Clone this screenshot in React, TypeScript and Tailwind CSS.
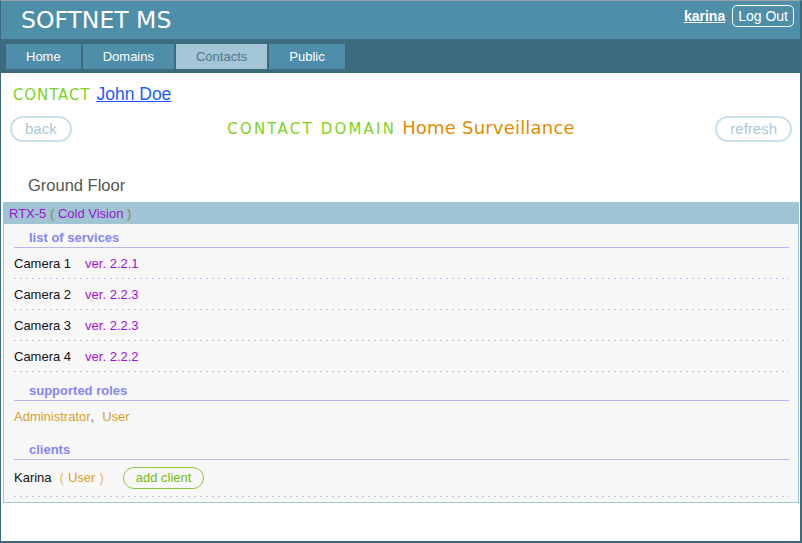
import React from "react";

function Dotted() {
  return (
    <div className="h-px bg-[image:repeating-linear-gradient(90deg,#c3bcf3_0px,#c3bcf3_2px,transparent_2px,transparent_6px)]" />
  );
}

function Heading({ children, first }: { children: React.ReactNode; first?: boolean }) {
  return (
    <div
      className={
        (first ? "pt-[4px] " : "pt-[9px] ") +
        "pl-[15px] leading-[19px] text-[13px] font-bold text-[#8585f2] border-b border-[#b9b6f2]"
      }
    >
      {children}
    </div>
  );
}

export default function App() {
  const services: [string, string][] = [
    ["Camera 1", "2.2.1"],
    ["Camera 2", "2.2.3"],
    ["Camera 3", "2.2.3"],
    ["Camera 4", "2.2.2"],
  ];
  const tabs = ["Home", "Domains", "Contacts", "Public"];
  return (
    <div className="w-[802px] h-[543px] bg-white border-l border-t border-r-2 border-b-2 border-[#3b6a7e] border-t-[#9aa3a8] font-['Liberation_Sans',Arial,sans-serif] flex flex-col">
      {/* header */}
      <div className="h-[38px] shrink-0 bg-[#4f8ea8] flex justify-between">
        <div className="font-['DejaVu_Sans',sans-serif] text-[23.5px] text-white leading-[38px] pl-[20px]">
          SOFTNET MS
        </div>
        <div className="flex items-center self-start pt-[4px] pr-[6px] gap-[7px]">
          <span className="text-[14px] font-bold underline text-white leading-[22px]">karina</span>
          <span className="h-[22px] px-[5px] border border-white rounded-[5px] text-[14px] text-white leading-[20px]">
            Log Out
          </span>
        </div>
      </div>
      {/* nav */}
      <div className="h-[34px] shrink-0 bg-[#3d6b7e] flex gap-[2px] pt-[5px] pl-[5px]">
        {tabs.map((t) => (
          <div
            key={t}
            className={
              "h-[25px] px-[20px] text-[13px] leading-[25px] " +
              (t === "Contacts" ? "bg-[#a3c5d5] text-[#4d7a8e]" : "bg-[#4f8ea8] text-white")
            }
          >
            {t}
          </div>
        ))}
      </div>
      {/* contact row */}
      <div className="h-[32px] shrink-0 overflow-hidden pt-[10px] pl-[12px] leading-[22px] text-[17.5px]">
        <span className="font-['DejaVu_Sans',sans-serif] text-[15px] tracking-[0.9px] text-[#7ed321]">CONTACT</span>
        <span className="ml-[6px] text-[#1f5cff] underline">John Doe</span>
      </div>
      {/* buttons row */}
      <div className="mt-[10px] h-[26px] shrink-0 grid grid-cols-[1fr_auto_1fr] items-center pl-[9px] pr-[8px]">
        <span className="justify-self-start h-[26px] border-2 border-[#c8e0ea] rounded-full px-[13px] text-[15px] text-[#a9c9d9] leading-[22px]">
          back
        </span>
        <div className="font-['DejaVu_Sans',sans-serif] text-[18px] leading-[26px] whitespace-nowrap">
          <span className="text-[15px] tracking-[2.2px] text-[#7ed321]">CONTACT DOMAIN</span>
          <span className="ml-[6px] text-[#e38b00] tracking-[0.2px]">Home Surveillance</span>
        </div>
        <span className="justify-self-end h-[26px] border-2 border-[#c8e0ea] rounded-full px-[13px] text-[15px] text-[#a9c9d9] leading-[22px]">
          refresh
        </span>
      </div>
      {/* ground floor */}
      <div className="mt-[34px] h-[20px] shrink-0 leading-[20px] text-[16.5px] text-[#555555] pl-[27px]">Ground Floor</div>
      {/* panel */}
      <div className="mt-[7px] ml-[2px] mr-[1px] shrink-0 border border-[#a0c4d3] bg-[#f7f7f7]">
        <div className="h-[21px] bg-[#a0c4d3] pl-[5px] text-[13px] leading-[21px]">
          <span className="text-[#9a14d2]">RTX-5</span>
          <span className="text-[#8c7c52]"> ( </span>
          <span className="text-[#9a14d2]">Cold Vision</span>
          <span className="text-[#8c7c52]"> )</span>
        </div>
        <div className="pl-[10px] pr-[9px] pb-[5px]">
          <Heading first>list of services</Heading>
          {services.map(([name, ver]) => (
            <div key={name}>
              <div className="h-[30px] pt-[1px] flex items-center text-[13px]">
                <span className="text-[#111111]">{name}</span>
                <span className="ml-[14px] text-[#a012d6]">ver. {ver}</span>
              </div>
              <Dotted />
            </div>
          ))}
          <Heading>supported roles</Heading>
          <div className="h-[30px] pt-[1px] flex items-center text-[13px]">
            <span className="text-[#d6a12a]">Administrator</span>
            <span className="text-[#7a6a3a]">,</span>
            <span className="ml-[8px] text-[#d6a12a]">User</span>
          </div>
          <Heading>clients</Heading>
          <div className="h-[36px] flex items-center text-[13px]">
            <span className="text-[#111111]">Karina</span>
            <span className="ml-[8px] text-[#e2b466]">(</span>
            <span className="ml-[4px] text-[#d6a12a]">User</span>
            <span className="ml-[4px] text-[#e2b466]">)</span>
            <span className="ml-[19px] h-[22px] border border-[#8cc63f] rounded-full px-[12px] text-[#78bb12] leading-[20px]">
              add client
            </span>
          </div>
          <Dotted />
        </div>
      </div>
    </div>
  );
}
